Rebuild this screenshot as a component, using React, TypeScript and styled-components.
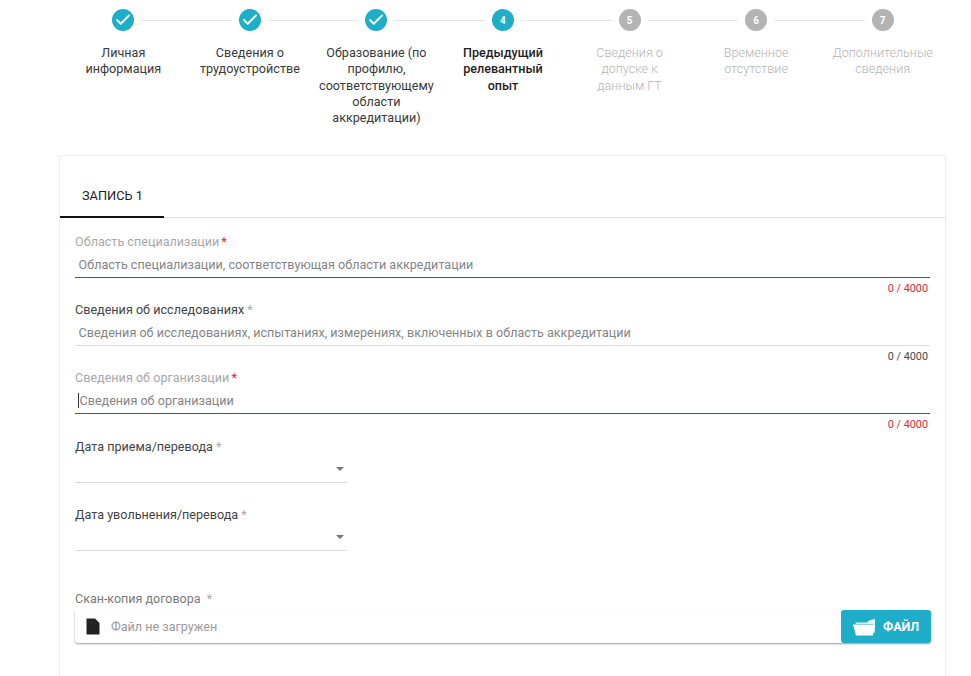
import React from 'react';
import styled, { createGlobalStyle } from 'styled-components';
import { Check } from 'lucide-react';

const GlobalStyle = createGlobalStyle`
  html, body {
    margin: 0;
    padding: 0;
    background: #fff;
    height: 676px;
    overflow: hidden;
    font-family: Roboto, "Liberation Sans", sans-serif;
  }
`;

const steps = [
  { label: 'Личная информация', state: 'done' },
  { label: 'Сведения о трудоустройстве', state: 'done' },
  { label: 'Образование (по профилю, соответствующему области аккредитации)', state: 'done' },
  { label: 'Предыдущий релевантный опыт', state: 'active' },
  { label: 'Сведения о допуске к данным\u00a0ГТ', state: 'todo' },
  { label: 'Временное отсутствие', state: 'todo' },
  { label: 'Дополнительные сведения', state: 'todo' },
] as const;

type StepState = 'done' | 'active' | 'todo';

const App = () => {
  return (
    <Page>
      <GlobalStyle />
      <Stepper>
        {steps.map((step, i) => (
          <Step key={step.label}>
            {i > 0 && <Connector />}
            <Circle $state={step.state}>
              {step.state === 'done' ? <Check size={18} strokeWidth={2.4} color="#fff" /> : i + 1}
            </Circle>
            <StepLabel $state={step.state}>{step.label}</StepLabel>
          </Step>
        ))}
      </Stepper>

      <Card>
        <Tabs>
          <Tab>ЗАПИСЬ 1</Tab>
        </Tabs>
        <Form>
          <TextField>
            <FieldLabel $muted>Область специализации<Star $red>*</Star></FieldLabel>
            <InputBox $error>Область специализации, соответствующая области аккредитации</InputBox>
            <Counter $error>0 / 4000</Counter>
          </TextField>
          <TextField>
            <FieldLabel>Сведения об исследованиях <Star>*</Star></FieldLabel>
            <InputBox>Сведения об исследованиях, испытаниях, измерениях, включенных в область аккредитации</InputBox>
            <Counter>0 / 4000</Counter>
          </TextField>
          <TextField>
            <FieldLabel $muted>Сведения об организации<Star $red>*</Star></FieldLabel>
            <InputBox $error><Caret />Сведения об организации</InputBox>
            <Counter $error>0 / 4000</Counter>
          </TextField>
          <DateField>
            <FieldLabel>Дата приема/перевода <Star>*</Star></FieldLabel>
            <SelectBox><Arrow /></SelectBox>
          </DateField>
          <DateField>
            <FieldLabel>Дата увольнения/перевода <Star>*</Star></FieldLabel>
            <SelectBox><Arrow /></SelectBox>
          </DateField>
          <UploadField>
            <UploadLabel>Скан-копия договора&nbsp; <Star>*</Star></UploadLabel>
            <UploadBox>
              <FileName>
                <svg width="14" height="17" viewBox="0 0 14 17">
                  <path d="M0.5 0.5H9L13.5 5V16.5H0.5Z" fill="#222" />
                </svg>
                <span>Файл не загружен</span>
              </FileName>
              <FileButton>
                <svg width="23" height="18" viewBox="0 0 23 18">
                  <path d="M2 4.5L14 4.5L16 2.5L21.5 1V6H3.5Z" fill="#fff" opacity="0.85" />
                  <path d="M0 6.5H22L19.8 17.5H3Z" fill="#fff" />
                  <path d="M21.8 1V14L20.6 16V2Z" fill="#fff" />
                </svg>
                ФАЙЛ
              </FileButton>
            </UploadBox>
          </UploadField>
        </Form>
      </Card>
    </Page>
  );
};

export default App;

const Page = styled.div`
  padding-left: 60px;
  width: 886px;
`;

const Stepper = styled.div`
  display: grid;
  grid-template-columns: repeat(7, minmax(0, 1fr));
  padding-top: 9px;
  height: 146px;
`;

const Step = styled.div`
  position: relative;
  display: flex;
  flex-direction: column;
  align-items: center;
`;

const Connector = styled.div`
  position: absolute;
  top: 11px;
  left: calc(-50% + 18px);
  right: calc(50% + 18px);
  height: 1px;
  background: #e4e6e8;
`;

const Circle = styled.div<{ $state: StepState }>`
  width: 22px;
  height: 22px;
  border-radius: 50%;
  display: flex;
  align-items: center;
  justify-content: center;
  background: ${(p) => (p.$state === 'todo' ? '#b3b3b3' : '#1eaec8')};
  color: #fff;
  font-size: 10px;
  font-weight: 700;
`;

const StepLabel = styled.div<{ $state: StepState }>`
  margin-top: 14px;
  padding: 0 8px;
  text-align: center;
  font-size: 12.6px;
  line-height: 16.3px;
  font-weight: ${(p) => (p.$state === 'active' ? 500 : p.$state === 'todo' ? 300 : 400)};
  color: ${(p) => (p.$state === 'active' ? '#1f1f1f' : p.$state === 'todo' ? '#b4b4b4' : '#3a3a3a')};
`;

const Card = styled.div`
  box-sizing: border-box;
  height: 521px;
  margin-left: -1px;
  width: 887px;
  border: 1px solid #eeeeee;
  border-bottom: 0;
`;

const Tabs = styled.div`
  display: flex;
  height: 61px;
  border-bottom: 1px solid #e0e0e0;
`;

const Tab = styled.div`
  box-sizing: border-box;
  width: 104px;
  height: 62px;
  padding: 32px 0 0 22px;
  border-bottom: 2px solid #111;
  font-size: 12.8px;
  line-height: 15px;
  font-weight: 400;
  color: #1c1c1c;
`;

const Form = styled.div`
  padding: 16px 15px 0 15px;
  display: flex;
  flex-direction: column;
`;

const TextField = styled.div`
  height: 68px;

  &:nth-child(3) {
    height: 68.6px;
  }
`;

const DateField = styled.div`
  height: 68px;
  width: 272px;
`;

const FieldLabel = styled.div<{ $muted?: boolean }>`
  font-size: 12.6px;
  line-height: 16px;
  height: 16px;
  color: ${(p) => (p.$muted ? '#a8a8a8' : '#444444')};
`;

const Star = styled.span<{ $red?: boolean }>`
  margin-left: ${(p) => (p.$red ? '2px' : '0')};
  color: ${(p) => (p.$red ? '#e8202e' : '#a8a8a8')};
`;

const InputBox = styled.div<{ $error?: boolean }>`
  box-sizing: border-box;
  height: 28px;
  padding: 7px 0 0 3.5px;
  font-size: 12.6px;
  line-height: 15px;
  color: #858585;
  border-bottom: 1px solid ${(p) => (p.$error ? '#e01a24' : '#dcdcdc')};
`;

const Caret = styled.span`
  display: inline-block;
  width: 0;
  height: 15px;
  margin-left: -1px;
  margin-right: 1px;
  vertical-align: -3px;
  border-left: 1px solid #333;
`;

const Counter = styled.div<{ $error?: boolean }>`
  margin-top: 4px;
  padding-right: 2px;
  text-align: right;
  font-size: 10.8px;
  line-height: 13px;
  color: ${(p) => (p.$error ? '#dd2a36' : '#4a4a4a')};
`;

const SelectBox = styled.div`
  position: relative;
  height: 27.4px;
  border-bottom: 1px solid #dcdcdc;
`;

const Arrow = styled.div`
  position: absolute;
  right: 3px;
  top: 12.5px;
  width: 0;
  height: 0;
  border-left: 4.5px solid transparent;
  border-right: 4.5px solid transparent;
  border-top: 4.5px solid #757575;
`;

const UploadField = styled.div`
  margin-top: 16.6px;
`;

const UploadLabel = styled.div`
  font-size: 12.5px;
  line-height: 15px;
  color: #7a7a7a;
`;

const UploadBox = styled.div`
  display: flex;
  justify-content: space-between;
  height: 33px;
  margin-top: 4px;
  margin-right: -1px;
  border-radius: 3px;
  background: #fff;
  box-shadow: 0 1px 2px rgba(0, 0, 0, 0.4);
`;

const FileName = styled.div`
  display: flex;
  align-items: center;
  gap: 11px;
  padding-left: 11px;
  font-size: 12.6px;
  color: #9a9a9a;
`;

const FileButton = styled.div`
  display: flex;
  align-items: center;
  gap: 7px;
  box-sizing: border-box;
  width: 90px;
  padding-left: 12px;
  border-radius: 3px;
  background: #1eaec8;
  color: #fff;
  font-size: 12.5px;
  font-weight: 700;
`;
